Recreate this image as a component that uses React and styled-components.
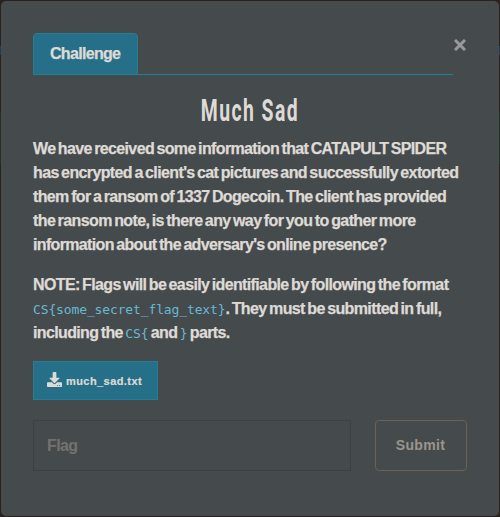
import React from 'react';
import styled, { createGlobalStyle } from 'styled-components';

const GlobalStyle = createGlobalStyle`
  * { box-sizing: border-box; }
  body { margin: 0; background: #29221f; overflow: hidden; }
`;

const Backdrop = styled.div`
  width: 500px;
  height: 517px;
  padding: 1px;
  background: linear-gradient(#2b211f 0 46px, #263c55 46px 55px, #2b211f 55px 112px, #243126 112px 164px, #29221f 164px);
  font-family: "Liberation Sans", Arial, sans-serif;
`;

const Dialog = styled.main`
  height: 515px;
  padding: 32px;
  border-radius: 5px;
  background: #454a4d;
  color: #dedad5;
`;

const Header = styled.header`
  display: flex;
  justify-content: space-between;
  height: 42px;
`;

const Tabs = styled.nav`
  width: 420px;
  border-bottom: 1px solid #217f9c;
`;

const Tab = styled.button`
  display: block;
  width: 105px;
  height: 42px;
  padding: 0 0 1px 16px;
  text-align: left;
  border: 1px solid #257d98;
  border-radius: 4px 4px 0 0;
  background: #266f88;
  color: #dedad5;
  font: 700 16px "Liberation Sans", Arial, sans-serif;
  letter-spacing: -0.68px;
  -webkit-text-stroke: 0.25px currentColor;
`;

const Close = styled.button`
  display: flex;
  width: 14px;
  height: 14px;
  margin-top: 5px;
  padding: 1px;
  border: 0;
  background: none;
  color: #989a9a;
`;

const Title = styled.h1`
  height: 36px;
  margin: 18px 0 8px;
  text-align: center;
  white-space: nowrap;
  font: 700 31px/36px Roboto, sans-serif;
  letter-spacing: 2.3px;
  transform: scaleX(0.625);
`;

const Paragraph = styled.p`
  margin: 0 0 16px;
  font-weight: 700;
  font-size: 16px;
  line-height: 24px;
  word-spacing: -1.4px;
  -webkit-text-stroke: 0.25px currentColor;
`;

const Line = styled.span`
  display: block;
  width: max-content;
  height: 24px;
  white-space: nowrap;
  letter-spacing: ${({ $track }) => $track}px;
`;

const Code = styled.code`
  color: #67b9d4;
  font: 400 13px/20px "DejaVu Sans Mono", monospace;
  letter-spacing: -0.13px;
  -webkit-text-stroke: 0;
`;

const Download = styled.button`
  display: flex;
  align-items: center;
  gap: 4px;
  width: 125px;
  height: 39px;
  padding: 0 13px;
  border: 1px solid #257d98;
  background: #266f88;
  color: #dedad5;
  font: 700 11px "Liberation Sans", Arial, sans-serif;
  letter-spacing: 0.43px;
  -webkit-text-stroke: 0.2px currentColor;
  white-space: nowrap;
`;

const DownloadIcon = styled.svg`
  flex: none;
  width: 15px;
  height: 15px;
  margin-top: -3px;
`;

const Form = styled.form`
  display: flex;
  justify-content: space-between;
  margin-top: 20px;
`;

const FlagInput = styled.input`
  width: 318px;
  height: 51px;
  padding: 0 13px;
  border: 1px solid #3c4143;
  border-radius: 0;
  outline: 0;
  background: transparent;
  color: #dedad5;
  font: 700 16px "Liberation Sans", Arial, sans-serif;
  letter-spacing: -0.6px;
  &::placeholder { color: #74726e; opacity: 1; }
`;

const Submit = styled.button`
  width: 92px;
  height: 51px;
  padding: 0 1px 2px 0;
  border: 1px solid #6d6153;
  border-radius: 4px;
  background: transparent;
  color: #9b958b;
  font: 700 14px "Liberation Sans", Arial, sans-serif;
  letter-spacing: 0.35px;
`;

export default function App() {
  return (
    <Backdrop>
      <GlobalStyle />
      <Dialog>
        <Header>
          <Tabs><Tab>Challenge</Tab></Tabs>
          <Close aria-label="Close">
            <svg width="12" height="12" viewBox="0 0 12 12" fill="none" stroke="currentColor" strokeWidth="3">
              <path d="M1 1l10 10M11 1L1 11" />
            </svg>
          </Close>
        </Header>
        <Title>Much Sad</Title>
        <Paragraph>
          <Line $track={-0.636}>We have received some information that CATAPULT SPIDER</Line>
          <Line $track={-0.624}>has encrypted a client's cat pictures and successfully extorted</Line>
          <Line $track={-0.628}>them for a ransom of 1337 Dogecoin. The client has provided</Line>
          <Line $track={-0.61}>the ransom note, is there any way for you to gather more</Line>
          <Line $track={-0.65}>information about the adversary's online presence?</Line>
        </Paragraph>
        <Paragraph>
          <Line $track={-0.63}>NOTE: Flags will be easily identifiable by following the format</Line>
          <Line $track={-0.61}><Code>{'CS{some_secret_flag_text}'}</Code>. They must be submitted in full,</Line>
          <Line $track={-0.64}>including the <Code>{'CS{'}</Code> and <Code>{'}'}</Code> parts.</Line>
        </Paragraph>
        <Download>
          <DownloadIcon viewBox="0 0 512 512" fill="currentColor">
            <path d="M216 0h80c13.300 0 24 10.700 24 24v168h87.700c17.800 0 26.700 21.500 14.100 34.100L269.700 378.300c-7.500 7.500-19.800 7.500-27.300 0L90.100 226.100c-12.600-12.600-3.700-34.100 14.100-34.100H192V24c0-13.300 10.700-24 24-24zm296 376v112c0 13.300-10.700 24-24 24H24c-13.300 0-24-10.700-24-24V376c0-13.300 10.700-24 24-24h146.700l49 49c20.100 20.100 52.500 20.100 72.600 0l49-49H488c13.300 0 24 10.700 24 24zm-124 88c0-11-9-20-20-20s-20 9-20 20 9 20 20 20 20-9 20-20zm64 0c0-11-9-20-20-20s-20 9-20 20 9 20 20 20 20-9 20-20z" />
          </DownloadIcon>
          much_sad.txt
        </Download>
        <Form onSubmit={(e) => e.preventDefault()}>
          <FlagInput placeholder="Flag" />
          <Submit>Submit</Submit>
        </Form>
      </Dialog>
    </Backdrop>
  );
}
